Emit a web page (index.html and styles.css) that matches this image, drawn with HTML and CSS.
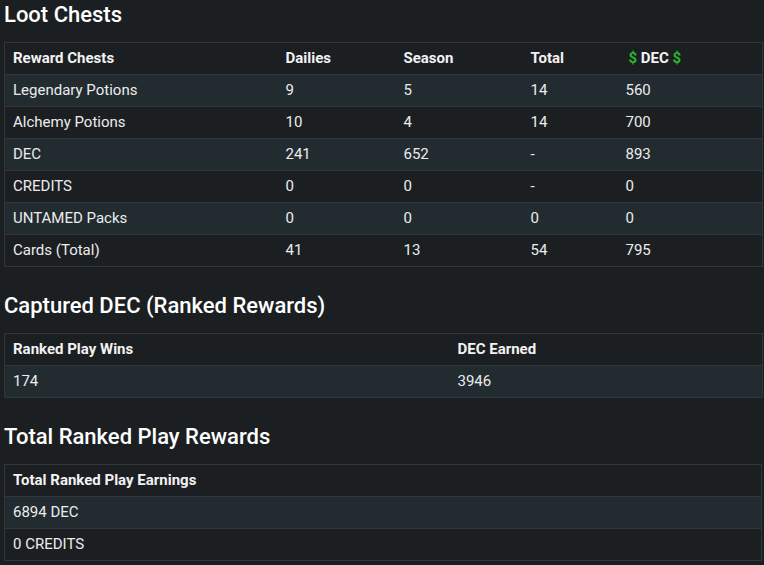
FILE: index.html
```html
<!DOCTYPE html>
<html>
<head>
<meta charset="utf-8">
<link rel="stylesheet" href="styles.css">
</head>
<body>
<div class="page">
  <section class="block">
    <h3 class="title">Loot Chests</h3>
    <table class="grid">
      <colgroup>
        <col class="c1"><col class="c2"><col class="c3"><col class="c4"><col class="c5">
      </colgroup>
      <thead>
        <tr><th>Reward Chests</th><th>Dailies</th><th>Season</th><th>Total</th><th class="money"><span class="dollar">$</span> DEC <span class="dollar">$</span></th></tr>
      </thead>
      <tbody>
        <tr><td>Legendary Potions</td><td>9</td><td>5</td><td>14</td><td>560</td></tr>
        <tr><td>Alchemy Potions</td><td>10</td><td>4</td><td>14</td><td>700</td></tr>
        <tr><td>DEC</td><td>241</td><td>652</td><td>-</td><td>893</td></tr>
        <tr><td>CREDITS</td><td>0</td><td>0</td><td>-</td><td>0</td></tr>
        <tr><td>UNTAMED Packs</td><td>0</td><td>0</td><td>0</td><td>0</td></tr>
        <tr><td>Cards (Total)</td><td>41</td><td>13</td><td>54</td><td>795</td></tr>
      </tbody>
    </table>
  </section>

  <section class="block">
    <h3 class="title">Captured DEC (Ranked Rewards)</h3>
    <table class="grid">
      <colgroup>
        <col class="w1"><col class="w2">
      </colgroup>
      <thead>
        <tr><th>Ranked Play Wins</th><th>DEC Earned</th></tr>
      </thead>
      <tbody>
        <tr><td>174</td><td>3946</td></tr>
      </tbody>
    </table>
  </section>

  <section class="block">
    <h3 class="title">Total Ranked Play Rewards</h3>
    <table class="grid">
      <thead>
        <tr><th>Total Ranked Play Earnings</th></tr>
      </thead>
      <tbody>
        <tr><td>6894 DEC</td></tr>
        <tr><td>0 CREDITS</td></tr>
      </tbody>
    </table>
  </section>
</div>
</body>
</html>
```

FILE: styles.css
```css
html, body {
  margin: 0;
  padding: 0;
  background: #1c1f22;
}

body {
  font-family: Roboto, "Liberation Sans", sans-serif;
  color: #ececec;
  overflow: hidden;
}

.page {
  padding: 0 2px 0 4px;
}

.block {
  margin-bottom: 26px;
}

.title {
  margin: 2px 0 14px 0;
  font-size: 22px;
  line-height: 26px;
  font-weight: 500;
  color: #ffffff;
}

.grid {
  width: 758px;
  border-collapse: collapse;
  table-layout: fixed;
  border: 1px solid #30363b;
  font-size: 15px;
}

.grid th,
.grid td {
  text-align: left;
  padding: 6px 8px;
  line-height: 19px;
  border-top: 1px solid #30363b;
  white-space: nowrap;
}

.grid th {
  font-weight: 700;
  color: #f2f2f2;
}

.grid th.money {
  padding-left: 11px;
}

.grid tbody tr:nth-child(odd) {
  background: #222b30;
}

.dollar {
  color: #2bb52b;
}

.c1 { width: 273px; }
.c2 { width: 118px; }
.c3 { width: 127px; }
.c4 { width: 95px; }
.c5 { width: 145px; }

.w1 { width: 445px; }
.w2 { width: 313px; }
```
